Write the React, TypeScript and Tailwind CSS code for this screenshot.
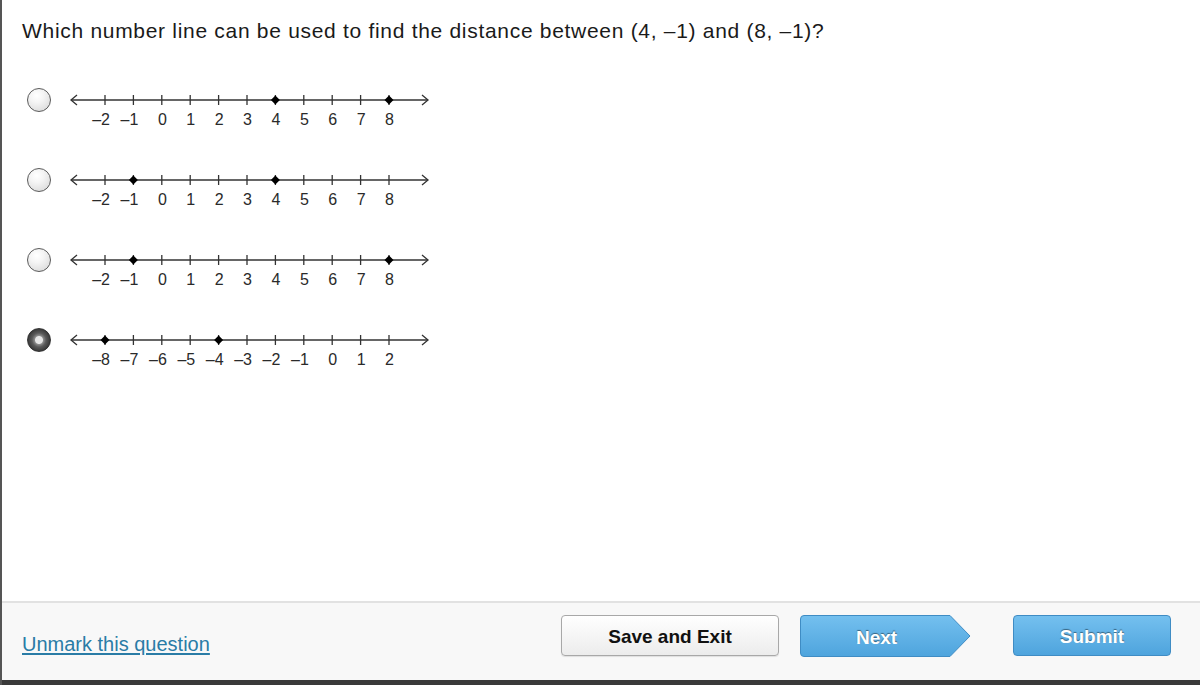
import React from "react";

type Line = { labels: number[]; points: number[] };

const lines: { line: Line; selected: boolean }[] = [
  { line: { labels: [-2, -1, 0, 1, 2, 3, 4, 5, 6, 7, 8], points: [4, 8] }, selected: false },
  { line: { labels: [-2, -1, 0, 1, 2, 3, 4, 5, 6, 7, 8], points: [-1, 4] }, selected: false },
  { line: { labels: [-2, -1, 0, 1, 2, 3, 4, 5, 6, 7, 8], points: [-1, 8] }, selected: false },
  { line: { labels: [-8, -7, -6, -5, -4, -3, -2, -1, 0, 1, 2], points: [-8, -4] }, selected: true },
];

function NumberLine({ line }: { line: Line }) {
  const y = 12;
  const x0 = 39;
  const step = 28.4;
  return (
    <svg width="370" height="44" viewBox="0 0 370 44" className="block">
      <line x1="5" y1={y} x2="362" y2={y} stroke="#333" strokeWidth="1.4" />
      <polyline points={`11,${y - 5} 5,${y} 11,${y + 5}`} fill="none" stroke="#333" strokeWidth="1.3" />
      <polyline points={`356,${y - 5} 362,${y} 356,${y + 5}`} fill="none" stroke="#333" strokeWidth="1.3" />
      {line.labels.map((n, i) => {
        const x = x0 + i * step;
        const isPt = line.points.includes(n);
        return (
          <g key={i}>
            <line x1={x} y1={y - 5} x2={x} y2={y + 5} stroke="#333" strokeWidth="1.3" />
            {isPt && (
              <polygon points={`${x - 4.5},${y} ${x},${y - 4.5} ${x + 4.5},${y} ${x},${y + 4.5}`} fill="#000" />
            )}
            <text
              x={x + 5}
              y={36.5}
              textAnchor="end"
              fontSize="16"
              fill="#2a2a2a"
              fontFamily="'Liberation Sans', Arial, sans-serif"
            >
              {n < 0 ? `\u2013${Math.abs(n)}` : `${n}`}
            </text>
          </g>
        );
      })}
    </svg>
  );
}

function Radio({ selected }: { selected: boolean }) {
  if (selected) {
    return (
      <div className="w-[24px] h-[24px] rounded-full shrink-0 border border-[#333] bg-[radial-gradient(circle,#e6e6e6_0_3.5px,#8a8a8a_4.5px,#5a5a5a_7px,#3a3a3a_11px)]" />
    );
  }
  return (
    <div className="w-[24px] h-[24px] rounded-full shrink-0 border border-[#5a5a5a] bg-[radial-gradient(circle_at_40%_30%,#ffffff_0,#f4f4f4_35%,#d4d4d4_100%)]" />
  );
}

export default function App() {
  return (
    <div
      className="w-[1200px] h-[685px] flex flex-col bg-white border-l-2 border-[#555] overflow-hidden"
      style={{ fontFamily: "'Liberation Sans', Arial, Helvetica, sans-serif" }}
    >
      <div className="flex-1 pl-[20px] pt-[17px]">
        <p className="text-[21px] leading-[28px] tracking-[0.7px] text-[#1a1a1a]">
          Which number line can be used to find the distance between (4, –1) and (8, –1)?
        </p>
        <div className="mt-[43px] pl-[5px] flex flex-col">
          {lines.map((l, i) => (
            <div key={i} className="h-[80px] flex items-start gap-[15px]">
              <Radio selected={l.selected} />
              <NumberLine line={l.line} />
            </div>
          ))}
        </div>
      </div>
      <div className="h-[79px] bg-[#f8f8f8] border-t-2 border-[#e2e2e2] flex items-start pl-[20px] pr-[29px] pt-[12px]">
        <a className="mt-[17px] text-[20px] leading-[24px] text-[#2a7ca6] underline underline-offset-2 cursor-pointer">
          Unmark this question
        </a>
        <div className="ml-auto flex items-start">
          <button className="w-[218px] h-[41px] pt-[4px] rounded-[4px] border border-[#a8a8a8] bg-gradient-to-b from-[#ffffff] to-[#ececec] text-[19px] font-bold text-[#111] shadow-[0_1px_1px_rgba(0,0,0,0.1)]">
            Save and Exit
          </button>
          <button className="relative ml-[21px] w-[171px] h-[42px] pt-[4px] text-[19px] font-bold text-white [text-shadow:0_-1px_1px_rgba(0,0,0,0.45)]">
            <svg className="absolute inset-0" width="171" height="42" viewBox="0 0 171 42">
              <defs>
                <linearGradient id="nb" x1="0" y1="0" x2="0" y2="1">
                  <stop offset="0" stopColor="#74c0ef" />
                  <stop offset="1" stopColor="#4ea4dd" />
                </linearGradient>
              </defs>
              <path
                d="M4,0.5 H150 L170,21 L150,41.5 H4 Q0.5,41.5 0.5,38 V4 Q0.5,0.5 4,0.5 Z"
                fill="url(#nb)"
                stroke="#3f8cc4"
                strokeWidth="1"
              />
            </svg>
            <span className="relative block w-[153px] text-center">Next</span>
          </button>
          <button className="ml-[42px] w-[158px] h-[41px] pt-[4px] rounded-[4px] border border-[#3f8cc4] bg-gradient-to-b from-[#74c0ef] to-[#4ea4dd] text-[19px] font-bold text-white [text-shadow:0_-1px_1px_rgba(0,0,0,0.45)]">
            Submit
          </button>
        </div>
      </div>
      <div className="h-[5px] bg-[#3a3a3a]" />
    </div>
  );
}
